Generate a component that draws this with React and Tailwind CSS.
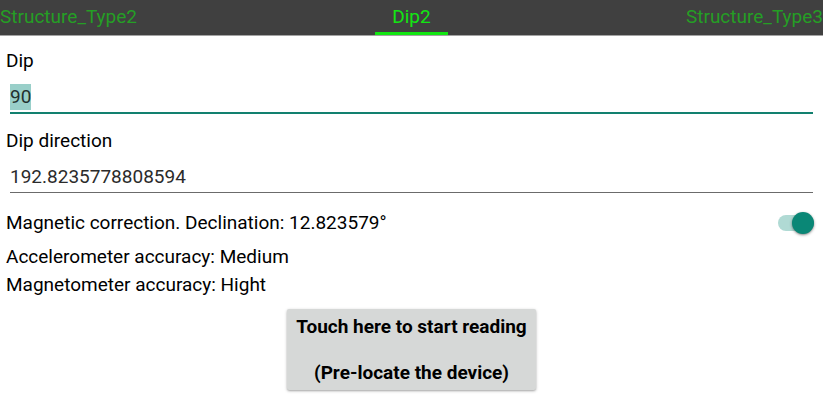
import React, { useEffect, useRef, useState } from "react";

const tabs = [
  { name: "Structure_Type2", align: "justify-self-start" },
  { name: "Dip2", align: "justify-self-center" },
  { name: "Structure_Type3", align: "justify-self-end" },
];

const TabStrip = ({ active, onSelect }) => (
  <nav className="grid grid-cols-3 h-9 bg-[#404040] border-b border-[#a3a3a3]">
    {tabs.map((tab) => (
      <button
        key={tab.name}
        type="button"
        onClick={() => onSelect(tab.name)}
        className={`pt-0.5 border-b-3 ${tab.align} ${
          active === tab.name
            ? "px-[17px] text-[#12e612] border-[#12e612]"
            : "text-[#259e25] border-transparent"
        }`}
      >
        {tab.name}
      </button>
    ))}
  </nav>
);

const Field = ({ id, label, value, onChange, inputRef }) => (
  <div className="h-20">
    <label htmlFor={id} className="block leading-7">
      {label}
    </label>
    <div className="mt-[9px] px-1">
      <input
        id={id}
        ref={inputRef}
        type="text"
        value={value}
        onChange={(e) => onChange(e.target.value)}
        className="block w-full pb-0.5 leading-[26px] text-[#2b2b2b] outline-none border-b border-[#6b6b6b] focus:border-b-2 focus:border-[#12806f] selection:bg-[#99cfc9] selection:text-[#22312f]"
      />
    </div>
  </div>
);

const App = () => {
  const [active, setActive] = useState("Dip2");
  const [dip, setDip] = useState("90");
  const [direction, setDirection] = useState("192.8235778808594");
  const [correction, setCorrection] = useState(true);
  const dipRef = useRef(null);

  // the dip value is ready to be typed over
  useEffect(() => {
    dipRef.current?.focus();
    dipRef.current?.select();
  }, []);

  return (
    <div className="min-h-screen bg-white text-black text-[19px] font-['Roboto',sans-serif]">
      <TabStrip active={active} onSelect={setActive} />
      <main className="px-1.5 pt-[11px]">
        <Field
          id="dip"
          label="Dip"
          value={dip}
          onChange={setDip}
          inputRef={dipRef}
        />
        <Field
          id="direction"
          label="Dip direction"
          value={direction}
          onChange={setDirection}
        />
        <label className="mt-0.5 flex items-center justify-between leading-7">
          <span>Magnetic correction. Declination: 12.823579°</span>
          <input
            type="checkbox"
            role="switch"
            checked={correction}
            onChange={(e) => setCorrection(e.target.checked)}
            className="peer sr-only"
          />
          <span className="flex items-center w-9 h-4 mr-[3px] rounded-full bg-[#c4c4c4] peer-checked:bg-[#b0dad4] peer-checked:justify-end">
            <span className="size-5.5 shrink-0 rounded-full bg-[#0a8776] shadow-sm shadow-black/40" />
          </span>
        </label>
        <div className="mt-1.5 leading-7">
          <p>Accelerometer accuracy: Medium</p>
          <p>Magnetometer accuracy: Hight</p>
        </div>
        <div className="mt-2.5 flex justify-center">
          <button
            type="button"
            className="px-[9px] py-1.5 rounded-xs bg-[#d6d8d7] font-bold leading-[23px] shadow-sm shadow-black/30"
          >
            Touch here to start reading
            <br />
            <br />
            (Pre-locate the device)
          </button>
        </div>
      </main>
    </div>
  );
};

export default App;
